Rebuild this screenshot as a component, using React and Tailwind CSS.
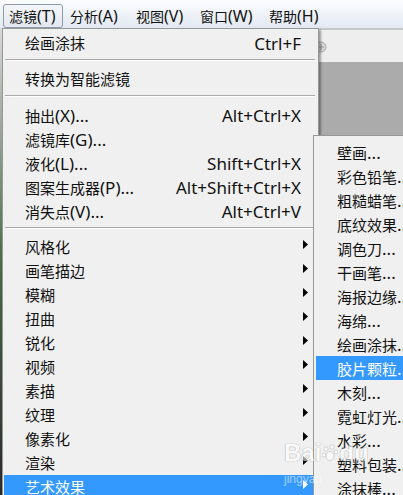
import React from "react";

const FONT = "font-['Noto_Sans','Noto_Sans_CJK_SC',sans-serif]";

function Label({ text, cjkSize = "text-[15px]", latSize = "text-[17px]" }) {
  const m = text.match(/^([\u4e00-\u9fff]+)(.*)$/);
  if (!m) return <span className={latSize}>{text}</span>;
  return (
    <span className="whitespace-nowrap leading-none">
      <span className={cjkSize}>{m[1]}</span>
      {m[2] ? <span className={latSize}>{m[2]}</span> : null}
    </span>
  );
}

function Tri({ white }) {
  return (
    <svg width="5" height="9" viewBox="0 0 5 9" className="-mt-[6px]">
      <path d="M0 0 L5 4.5 L0 9 Z" fill={white ? "#ffffff" : "#000000"} />
    </svg>
  );
}

const mainItems = [
  { t: "绘画涂抹", s: "Ctrl+F" },
  "sep",
  { t: "转换为智能滤镜" },
  "sep",
  { t: "抽出(X)...", s: "Alt+Ctrl+X" },
  { t: "滤镜库(G)..." },
  { t: "液化(L)...", s: "Shift+Ctrl+X" },
  { t: "图案生成器(P)...", s: "Alt+Shift+Ctrl+X" },
  { t: "消失点(V)...", s: "Alt+Ctrl+V" },
  "sep",
  { t: "风格化", a: true },
  { t: "画笔描边", a: true },
  { t: "模糊", a: true },
  { t: "扭曲", a: true },
  { t: "锐化", a: true },
  { t: "视频", a: true },
  { t: "素描", a: true },
  { t: "纹理", a: true },
  { t: "像素化", a: true },
  { t: "渲染", a: true },
  { t: "艺术效果", a: true, active: true },
  { t: "杂色", a: true },
];

const subItems = [
  "壁画...",
  "彩色铅笔...",
  "粗糙蜡笔...",
  "底纹效果...",
  "调色刀...",
  "干画笔...",
  "海报边缘...",
  "海绵...",
  "绘画涂抹...",
  "胶片颗粒...",
  "木刻...",
  "霓虹灯光...",
  "水彩...",
  "塑料包装...",
  "涂抹棒...",
];

const menubar = [
  { t: "滤镜(T)", w: "w-[60px]", pl: "pl-[5px]", active: true },
  { t: "分析(A)", w: "w-[66px]", pl: "pl-[7px]" },
  { t: "视图(V)", w: "w-[64px]", pl: "pl-[7px]" },
  { t: "窗口(W)", w: "w-[69px]", pl: "pl-[7px]" },
  { t: "帮助(H)", w: "w-[66px]", pl: "pl-[7px]" },
];

export default function App() {
  return (
    <div className={`${FONT} relative w-[403px] h-[495px] overflow-hidden bg-[#f0f0f0] text-[#111]`}>
      {/* menu bar */}
      <div className="h-[28px] pt-[4px] pl-[3px] flex bg-gradient-to-b from-[#fbfcfe] to-[#e2e9f2]">
        {menubar.map((m) => (
          <div
            key={m.t}
            className={`${m.w} ${m.pl} h-[24px] flex items-center ${
              m.active
                ? "border border-[#8f9aa8] rounded-[3px] bg-gradient-to-b from-[#f4f6f9] to-[#e3e8ee]"
                : ""
            }`}
          >
            <Label text={m.t} cjkSize="text-[14px]" latSize="text-[16px]" />
          </div>
        ))}
      </div>

      <div className="flex">
        {/* left strip */}
        <div className="w-[2px] h-[467px] bg-gradient-to-b from-[#d9d9d9] via-[#4a6a48] to-[#2a2a2a]" />

        {/* main menu */}
        <div className="relative z-10 w-[317px] border border-[#979797] bg-[#f0f0f0] pt-[2px] shadow-[2px_2px_2px_rgba(0,0,0,0.35)]">
          {mainItems.map((it, i) =>
            it === "sep" ? (
              <div key={i} className="h-[12px] pt-[4px] pl-[2px] pr-[3px]">
                <div className="h-px bg-[#a9a9a9]" />
                <div className="h-px bg-white" />
              </div>
            ) : (
              <div
                key={i}
                className={`h-[24px] ml-[1px] pl-[21px] flex items-center ${
                  it.active ? "bg-[#3399ff] text-white" : ""
                }`}
              >
                <Label text={it.t} />
                <div className="flex-1" />
                {it.s ? <span className="text-[17px] leading-none whitespace-nowrap">{it.s}</span> : null}
                <div className="w-[17px] pl-[2px] flex items-center">
                  {it.a ? <Tri white={it.active} /> : null}
                </div>
              </div>
            )
          )}
        </div>

        {/* background area on right */}
        <div className="flex-1 flex flex-col">
          <div className="h-[34px] border-t-2 border-[#c8c8c8] bg-[#eeeeee] flex items-center">
            <svg width="8" height="12" viewBox="0 0 8 12" className="mt-[1px]">
              <circle cx="2" cy="6" r="5" fill="#d6d6d6" stroke="#a8a8a8" strokeWidth="1" />
              <path d="M2 3 V9 M-1 6 H5" stroke="#9a9a9a" strokeWidth="1" />
            </svg>
          </div>
          <div className="h-[80px] bg-[#ababab]" />
        </div>
      </div>

      {/* submenu */}
      <div className="absolute z-20 left-[313px] top-[135px] w-[120px] border border-[#979797] bg-[#f0f0f0] pt-[4px]">
        {subItems.map((t) => (
          <div
            key={t}
            className={`h-[24px] ml-[2px] pl-[21px] flex items-center ${
              t === "胶片颗粒..." ? "bg-[#3399ff] text-white" : ""
            }`}
          >
            <Label text={t} />
          </div>
        ))}
      </div>

      {/* watermark */}
      <div className="absolute z-30 left-[284px] top-[441px] pointer-events-none opacity-60 flex flex-col">
        <div className="flex items-center font-['Liberation_Sans',sans-serif] font-bold text-[24px] leading-none text-white [text-shadow:0_0_1px_#888,0_0_1px_#888]">
          <span>Bai</span>
          <svg width="16" height="18" viewBox="0 0 16 18" className="mx-[1px]">
            <circle cx="4" cy="5" r="2.2" fill="#fff" stroke="#999" strokeWidth="0.6" />
            <circle cx="10" cy="3" r="2.2" fill="#fff" stroke="#999" strokeWidth="0.6" />
            <circle cx="14" cy="8" r="2" fill="#fff" stroke="#999" strokeWidth="0.6" />
            <circle cx="2" cy="11" r="2" fill="#fff" stroke="#999" strokeWidth="0.6" />
            <ellipse cx="8" cy="12" rx="4" ry="4.5" fill="#fff" stroke="#999" strokeWidth="0.6" />
          </svg>
          <span>du</span>
        </div>
        <div className="font-['Liberation_Sans',sans-serif] text-[12px] leading-none mt-[8px] text-white/90">jingyan</div>
      </div>
    </div>
  );
}
